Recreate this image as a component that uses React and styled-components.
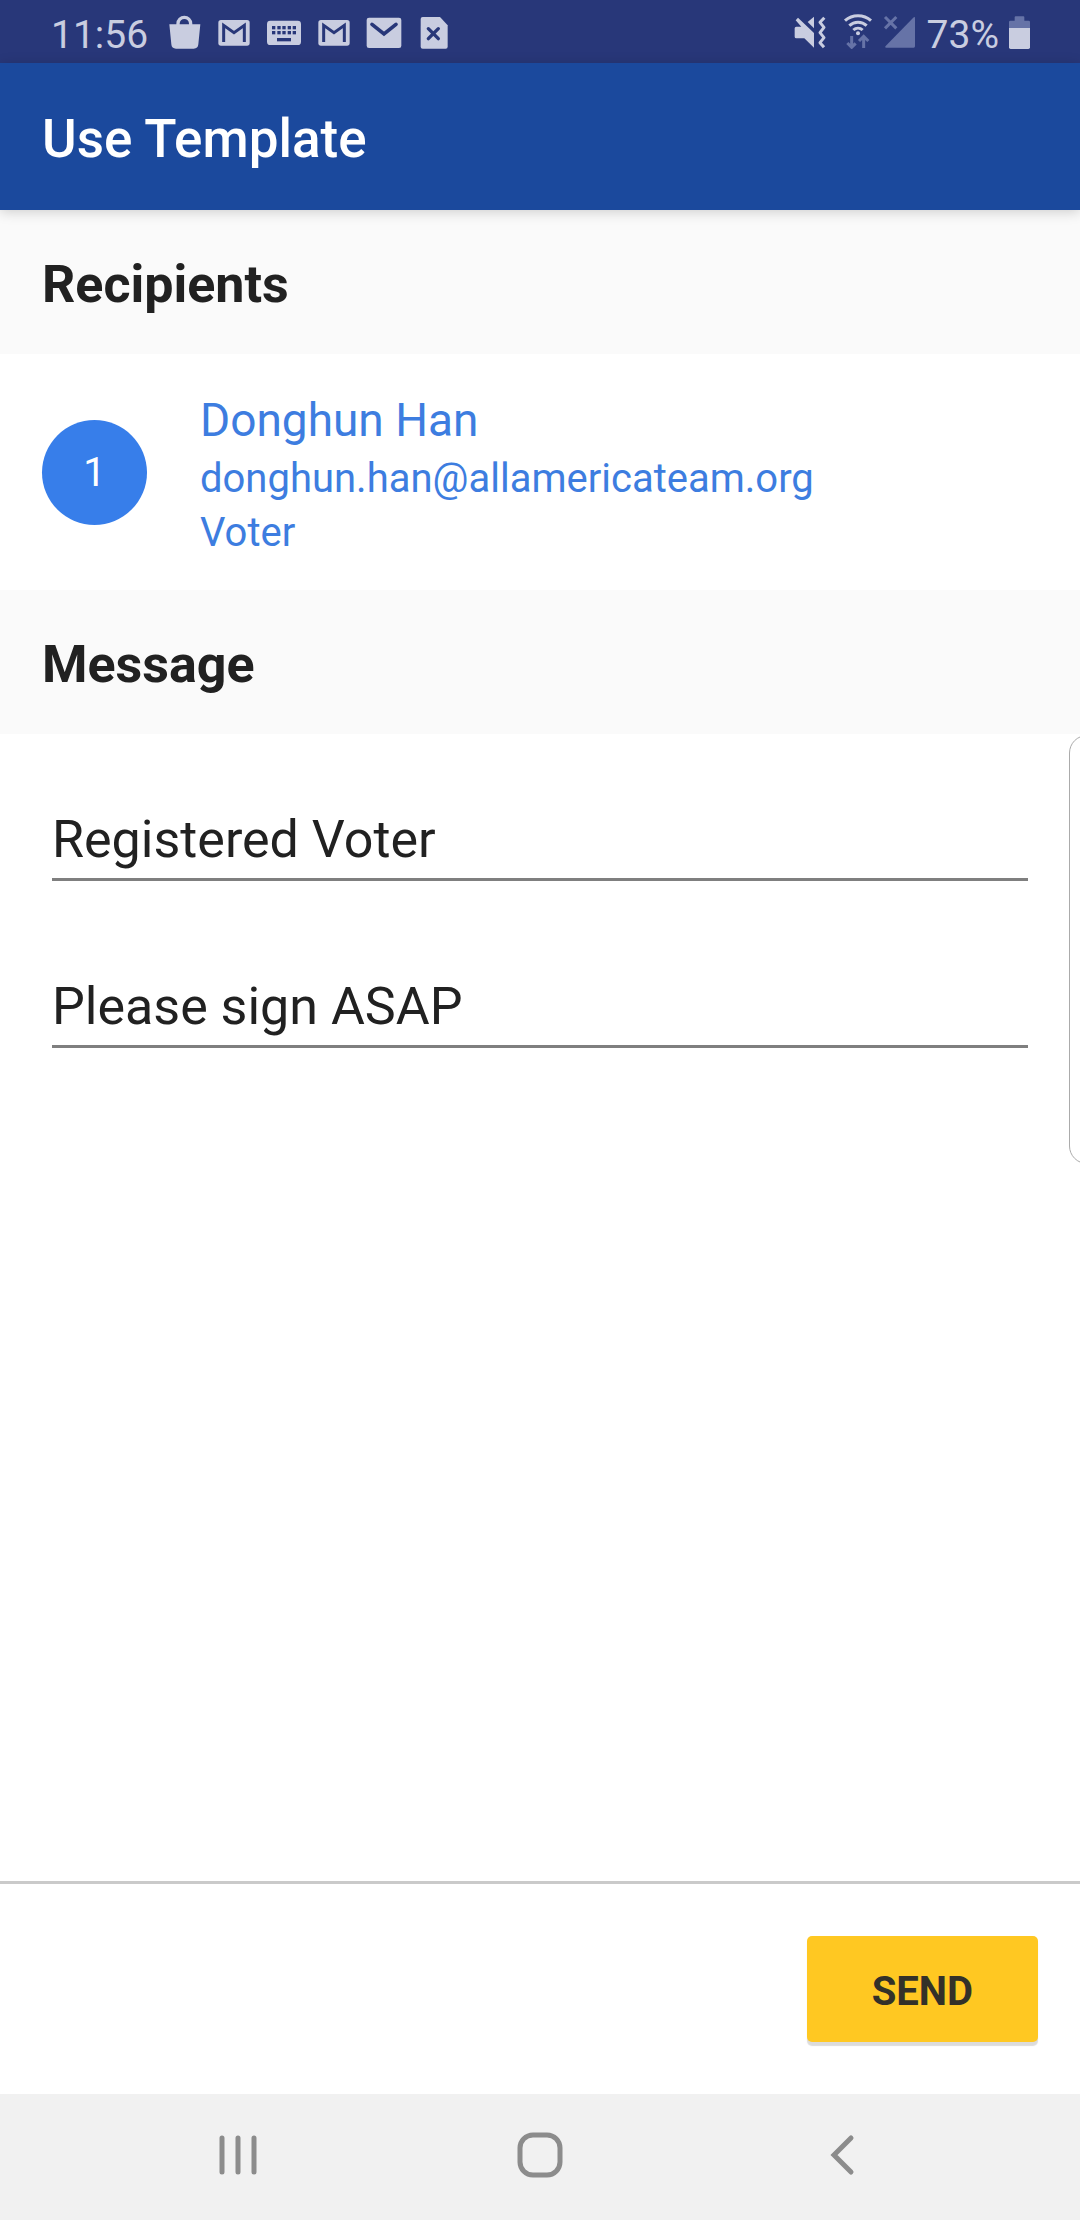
import styled, { createGlobalStyle } from 'styled-components';

const GlobalStyle = createGlobalStyle`
    * {
        box-sizing: border-box;
    }

    body {
        margin: 0;
        background: #fff;
        font-family: Roboto, sans-serif;
        color: #212121;
    }
`;

const Screen = styled.div`
    position: relative;
    display: flex;
    flex-direction: column;
    min-height: 100vh;
    overflow-x: hidden;
`;

const StatusBar = styled.div`
    display: flex;
    align-items: center;
    justify-content: space-between;
    height: 63px;
    padding: 0 48px 0 51px;
    background: #283779;
    color: #c9cde0;
`;

const StatusGroup = styled.div`
    display: flex;
    align-items: center;
    gap: ${({ $gap }) => $gap}px;
`;

const StatusText = styled.span`
    padding-top: 6px;
    font-size: 39px;
    line-height: 48px;
`;

const Clock = styled(StatusText)`
    padding-right: 4px;
`;

const StatusIcon = styled.svg`
    display: block;
    flex: none;
    width: ${({ $width }) => $width}px;
    height: 35px;
    fill: ${({ $dim }) => ($dim ? '#6673a7' : '#c9cde0')};
`;

const AppBar = styled.header`
    position: relative;
    padding: 46px 42px 41px;
    background: #1b499d;
    box-shadow: 0 2px 12px rgba(0, 0, 0, 0.18);
`;

const Title = styled.h1`
    margin: 0;
    font-size: 53px;
    font-weight: 500;
    line-height: 60px;
    color: #fff;
`;

const Content = styled.main`
    flex: 1;
`;

const SectionTitle = styled.h2`
    margin: 0;
    padding: 45px 42px 39px;
    background: #fafafa;
    font-size: 52px;
    font-weight: 700;
    line-height: 60px;
`;

const Recipient = styled.div`
    display: flex;
    align-items: center;
    gap: 53px;
    padding: 30px 42px;
`;

const Order = styled.span`
    display: flex;
    align-items: center;
    justify-content: center;
    flex: none;
    width: 105px;
    height: 105px;
    border-radius: 50%;
    background: #377eea;
    font-size: 40px;
    color: #fff;
`;

const Details = styled.div`
    min-width: 0;
    padding-top: 4px;
    color: #3d7de0;
`;

const Name = styled.div`
    font-size: 46px;
    line-height: 64px;
`;

const Detail = styled.div`
    font-size: 40px;
    line-height: 54px;
    overflow-wrap: anywhere;
`;

const Form = styled.form`
    display: flex;
    flex-direction: column;
    gap: 95px;
    padding: 75px 52px;
`;

const Field = styled.input`
    width: 100%;
    height: 72px;
    padding: 0 0 8px;
    border: 0;
    border-bottom: 3px solid #7f7f7f;
    border-radius: 0;
    background: transparent;
    font-family: inherit;
    font-size: 52px;
    color: #212121;
    outline: none;
`;

// Edge panel handle, floats over the right side of the screen
const EdgeHandle = styled.div`
    position: absolute;
    top: 735px;
    right: -30px;
    width: 41px;
    height: 429px;
    border: 1px solid #ababab;
    border-radius: 18px;
    background: #fff;
`;

const Footer = styled.footer`
    display: flex;
    justify-content: flex-end;
    padding: 52px 42px;
    border-top: 3px solid #cacaca;
`;

const SendButton = styled.button`
    padding: 33px 65px 27px;
    border: 0;
    border-radius: 5px;
    background: #ffc822;
    box-shadow: 0 4px 1px rgba(0, 0, 0, 0.14);
    font-family: inherit;
    font-size: 40px;
    font-weight: 700;
    line-height: 46px;
    color: #333129;
`;

const NavBar = styled.nav`
    display: flex;
    height: 126px;
    padding: 0 8% 4px;
    background: #f1f1f1;
`;

const NavButton = styled.button`
    display: flex;
    align-items: center;
    justify-content: center;
    flex: 1;
    padding: 0;
    border: 0;
    background: none;
`;

const NavIcon = styled.svg`
    width: 48px;
    height: 48px;
    fill: none;
    stroke: #8c8c8c;
    stroke-width: 5;
    stroke-linecap: round;
`;

const BagIcon = () => (
    <StatusIcon $width={36} viewBox='0 0 108 105'>
        <path d='M10 31h93l-6 60q-1 13-14 13H30q-13 0-14-13z' />
        <path d='M36 34v-5a19 19 0 0 1 38 0v5' fill='none' stroke='#c9cde0' strokeWidth='10' />
    </StatusIcon>
);

const GmailIcon = () => (
    <StatusIcon $width={36} viewBox='0 0 108 105'>
        <rect x='7' y='18' width='94' height='77' rx='8' />
        <path d='M23 84V34L54 56L85 34V84' fill='none' stroke='#283779' strokeWidth='9' />
    </StatusIcon>
);

const KeyboardIcon = () => (
    <StatusIcon $width={36} viewBox='0 0 108 105'>
        <rect x='3' y='20' width='102' height='73' rx='10' />
        <g fill='#283779'>
            {[18, 34, 49, 65, 80].map((x) => (
                <g key={x}>
                    <rect x={x} y='36' width='10' height='10' />
                    <rect x={x} y='51' width='10' height='10' />
                </g>
            ))}
            <rect x='33' y='72' width='42' height='10' />
        </g>
    </StatusIcon>
);

const MailIcon = () => (
    <StatusIcon $width={36} viewBox='0 0 108 105'>
        <rect x='2' y='11' width='104' height='91' rx='7' />
        <path
            d='M18 31L54 60L90 31'
            fill='none'
            stroke='#283779'
            strokeWidth='11'
            strokeLinecap='round'
        />
    </StatusIcon>
);

const FileIcon = () => (
    <StatusIcon $width={36} viewBox='0 0 108 105'>
        <path d='M20 9H72L95 34V98q0 6-6 6H20q-6 0-6-6V15q0-6 6-6z' />
        <path
            d='M37 44L67 74M67 44L37 74'
            fill='none'
            stroke='#283779'
            strokeWidth='10'
            strokeLinecap='round'
        />
    </StatusIcon>
);

const MuteIcon = () => (
    <StatusIcon $width={41} viewBox='0 0 123 105'>
        <path d='M5 43q0-5 5-5H25L8 19L15 11L63 57V101L34 73H10q-5 0-5-5z' />
        <path d='M44 24L63 8V43z' />
        <path
            d='M94 11L81 25L93 40L81 56L93 71L81 86L93 100'
            fill='none'
            stroke='#c9cde0'
            strokeWidth='9'
            strokeLinejoin='round'
        />
    </StatusIcon>
);

const WifiIcon = () => (
    <StatusIcon $width={30} viewBox='0 0 90 105'>
        <g fill='none' strokeWidth='9'>
            <path d='M6 20A58 58 0 0 1 84 20' stroke='#c9cde0' />
            <path d='M19 35A38 38 0 0 1 71 35' stroke='#c9cde0' />
            <path d='M31 48A21 21 0 0 1 59 48' stroke='#c9cde0' />
            <path d='M26 66V100M13 87L26 100L38 88' stroke='#6673a7' />
            <path d='M62 102V67M48 81L62 67L76 81' stroke='#6673a7' />
        </g>
        <circle cx='45' cy='58' r='6' />
    </StatusIcon>
);

const SignalIcon = () => (
    <StatusIcon $width={36} $dim viewBox='0 0 108 105'>
        <path d='M93 12q6-6 6 1V97q0 4-4 4H13q-6 0-2-5z' />
        <path d='M9 9L43 43M43 9L9 43' fill='none' stroke='#6673a7' strokeWidth='9' />
    </StatusIcon>
);

const BatteryIcon = () => (
    <StatusIcon $width={24} viewBox='0 0 72 105'>
        <path d='M20 20V10q0-3 3-3H46q3 0 3 3V20H62q4 0 4 4V42H3V24q0-4 4-4z' fill='#6673a7' />
        <path d='M3 42H66V100q0 5-5 5H8q-5 0-5-5z' />
    </StatusIcon>
);

export default function App() {
    return (
        <Screen>
            <GlobalStyle />
            <StatusBar>
                <StatusGroup $gap={14}>
                    <Clock>11:56</Clock>
                    <BagIcon />
                    <GmailIcon />
                    <KeyboardIcon />
                    <GmailIcon />
                    <MailIcon />
                    <FileIcon />
                </StatusGroup>
                <StatusGroup $gap={9}>
                    <MuteIcon />
                    <WifiIcon />
                    <SignalIcon />
                    <StatusText>73%</StatusText>
                    <BatteryIcon />
                </StatusGroup>
            </StatusBar>
            <AppBar>
                <Title>Use Template</Title>
            </AppBar>
            <Content>
                <SectionTitle>Recipients</SectionTitle>
                <Recipient>
                    <Order>1</Order>
                    <Details>
                        <Name>Donghun Han</Name>
                        <Detail>donghun.han@allamericateam.org</Detail>
                        <Detail>Voter</Detail>
                    </Details>
                </Recipient>
                <SectionTitle>Message</SectionTitle>
                <Form id='message' onSubmit={(e) => e.preventDefault()}>
                    <Field aria-label='Subject' defaultValue='Registered Voter' />
                    <Field aria-label='Message' defaultValue='Please sign ASAP' />
                </Form>
            </Content>
            <EdgeHandle />
            <Footer>
                <SendButton type='submit' form='message'>SEND</SendButton>
            </Footer>
            <NavBar>
                <NavButton aria-label='Recent apps'>
                    <NavIcon viewBox='0 0 48 48'>
                        <path d='M8 7V41M24 7V41M40 7V41' />
                    </NavIcon>
                </NavButton>
                <NavButton aria-label='Home'>
                    <NavIcon viewBox='0 0 48 48'>
                        <rect x='4' y='4' width='40' height='40' rx='13' />
                    </NavIcon>
                </NavButton>
                <NavButton aria-label='Back'>
                    <NavIcon viewBox='0 0 48 48'>
                        <path d='M33 7L16 24L33 41' />
                    </NavIcon>
                </NavButton>
            </NavBar>
        </Screen>
    );
}
